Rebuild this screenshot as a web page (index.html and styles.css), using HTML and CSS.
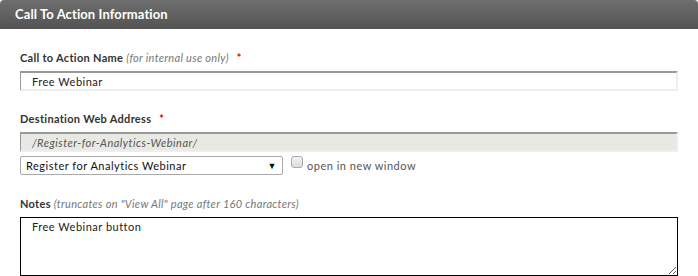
FILE: index.html
```html
<!DOCTYPE html>
<html lang="en">
<head>
    <meta charset="UTF-8">
    <title>Call To Action Information</title>
    <link rel="stylesheet" href="styles.css">
</head>
<body>

    <div class="panel">
        <h2 class="panel-title">Call To Action Information</h2>

        <div class="panel-body">
            <div class="field">
                <label class="field-label">Call to Action Name <em>(for internal use only)</em> <span class="req">*</span></label>
                <input type="text" class="text-input" value="Free Webinar">
            </div>

            <div class="field">
                <label class="field-label">Destination Web Address <span class="req">*</span></label>
                <input type="text" class="text-input readonly" value="/Register-for-Analytics-Webinar/" readonly>
                <div class="link-row">
                    <div class="select-box">
                        <span>Register for Analytics Webinar</span>
                        <span class="arrow">&#9660;</span>
                    </div>
                    <span class="check"></span>
                    <span class="check-label">open in new window</span>
                </div>
            </div>

            <div class="field notes">
                <label class="field-label">Notes <em>(truncates on "View All" page after 160 characters)</em></label>
                <textarea class="notes-box">Free Webinar button</textarea>
            </div>
        </div>
    </div>

</body>
</html>
```

FILE: styles.css
```css
body {
    margin: 0;
    background: #fff;
    font-family: "Lato", "Liberation Sans", sans-serif;
    color: #333;
}

.panel-title {
    margin: 0;
    height: 29px;
    line-height: 29px;
    padding-left: 15px;
    font-size: 13px;
    font-weight: bold;
    letter-spacing: 0.1px;
    color: #fff;
    background: linear-gradient(#6e6e6e, #535353);
    border-radius: 4px 4px 0 0;
}

.panel-body {
    padding: 0 20px;
}

.field {
    padding-top: 22px;
}

.field + .field {
    padding-top: 21px;
}

.field.notes {
    padding-top: 22px;
}

.field-label {
    display: block;
    height: 14px;
    line-height: 14px;
    font-size: 11px;
    font-weight: bold;
    letter-spacing: 0.3px;
    color: #333;
    margin-bottom: 6px;
}

.field-label em {
    font-weight: normal;
    color: #777;
}

.req {
    color: #e00;
    margin-left: 5px;
}

.text-input {
    display: block;
    box-sizing: border-box;
    width: 658px;
    height: 20px;
    margin: 0;
    padding: 0 0 0 11px;
    font-family: inherit;
    font-size: 11px;
    letter-spacing: 0.5px;
    color: #222;
    background: #fff;
    border-style: solid;
    border-width: 2px 2px 2px 1px;
    border-color: #999 #eee #eee #999;
    outline: none;
}

.text-input.readonly {
    background: #e9e9e3;
    color: #555;
    font-style: italic;
}

.link-row {
    display: flex;
    align-items: center;
    margin-top: 4px;
    height: 19px;
}

.select-box {
    box-sizing: border-box;
    width: 263px;
    height: 19px;
    padding: 0 5px 0 5px;
    display: flex;
    align-items: center;
    justify-content: space-between;
    font-size: 11px;
    letter-spacing: 0.5px;
    color: #111;
    border: 1px solid #aaa;
    border-radius: 2px;
}

.arrow {
    font-size: 9px;
}

.check {
    box-sizing: border-box;
    width: 12px;
    height: 12px;
    margin: -7px 4px 0 8px;
    border: 1px solid #aaa;
    border-radius: 3px;
    background: linear-gradient(#f4f4f4, #ddd);
}

.check-label {
    font-size: 11px;
    letter-spacing: 0.5px;
    color: #555;
}

.notes-box {
    display: block;
    box-sizing: border-box;
    width: 658px;
    height: 59px;
    margin: 0;
    padding: 2px 11px;
    font-family: inherit;
    font-size: 11px;
    letter-spacing: 0.5px;
    color: #222;
    border: 1px solid #000;
    resize: vertical;
}
```
